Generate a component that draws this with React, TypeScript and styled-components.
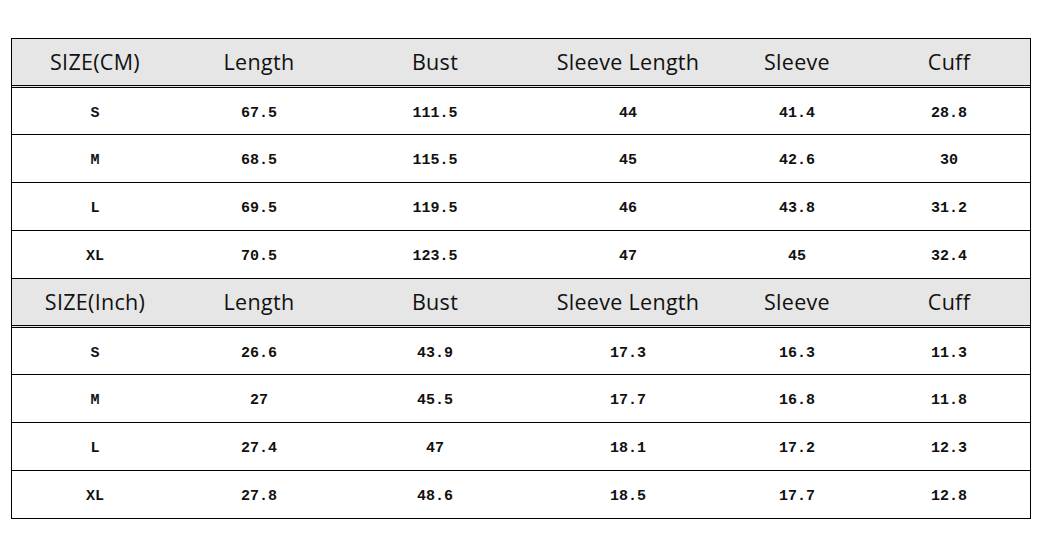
import React from "react";
import styled, { createGlobalStyle } from "styled-components";

const Global = createGlobalStyle`
  html, body { margin: 0; padding: 0; background: #fff; }
  body { font-family: "Open Sans", "Noto Sans", sans-serif; }
`;

const Page = styled.div`
  padding: 38px 0 0 11px;
`;

const Table = styled.div`
  width: 1020px;
  box-sizing: border-box;
  border: 1px solid #000;
`;

const Section = styled.div`
  display: flex;
  flex-direction: column;
`;

const cols = "166px 162px 190px 196px 142px 162px";

const HeaderRow = styled.div`
  display: grid;
  grid-template-columns: ${cols};
  height: 46px;
  background: #e6e6e6;
  border-bottom: 3px double #000;
  align-items: center;
`;

const HeaderCell = styled.div`
  text-align: center;
  font-family: "Open Sans", "Noto Sans", sans-serif;
  font-size: 21.5px;
  letter-spacing: 0.3px;
  color: #111;
  white-space: nowrap;
  padding-bottom: 2px;
`;

const Row = styled.div<{ $last?: boolean; $first?: boolean }>`
  display: grid;
  grid-template-columns: ${cols};
  height: ${(p) => (p.$first ? 46 : 47)}px;
  border-bottom: ${(p) => (p.$last ? "none" : "1px solid #000")};
  align-items: center;
`;

const Cell = styled.div`
  text-align: center;
  font-family: "Liberation Mono", "DejaVu Sans Mono", monospace;
  font-weight: bold;
  font-size: 15px;
  color: #111;
  padding-top: 4px;
`;

const headersCM = ["SIZE(CM)", "Length", "Bust", "Sleeve Length", "Sleeve", "Cuff"];
const headersIn = ["SIZE(Inch)", "Length", "Bust", "Sleeve Length", "Sleeve", "Cuff"];

const cm = [
  ["S", "67.5", "111.5", "44", "41.4", "28.8"],
  ["M", "68.5", "115.5", "45", "42.6", "30"],
  ["L", "69.5", "119.5", "46", "43.8", "31.2"],
  ["XL", "70.5", "123.5", "47", "45", "32.4"],
];

const inch = [
  ["S", "26.6", "43.9", "17.3", "16.3", "11.3"],
  ["M", "27", "45.5", "17.7", "16.8", "11.8"],
  ["L", "27.4", "47", "18.1", "17.2", "12.3"],
  ["XL", "27.8", "48.6", "18.5", "17.7", "12.8"],
];

function SizeSection({ headers, rows, last }: { headers: string[]; rows: string[][]; last?: boolean }) {
  return (
    <Section>
      <HeaderRow>
        {headers.map((h, i) => (
          <HeaderCell key={i}>{h}</HeaderCell>
        ))}
      </HeaderRow>
      {rows.map((r, i) => (
        <Row key={i} $first={i === 0} $last={last && i === rows.length - 1}>
          {r.map((c, j) => (
            <Cell key={j}>{c}</Cell>
          ))}
        </Row>
      ))}
    </Section>
  );
}

export default function App() {
  return (
    <>
      <Global />
      <Page>
        <Table>
          <SizeSection headers={headersCM} rows={cm} />
          <SizeSection headers={headersIn} rows={inch} last />
        </Table>
      </Page>
    </>
  );
}
